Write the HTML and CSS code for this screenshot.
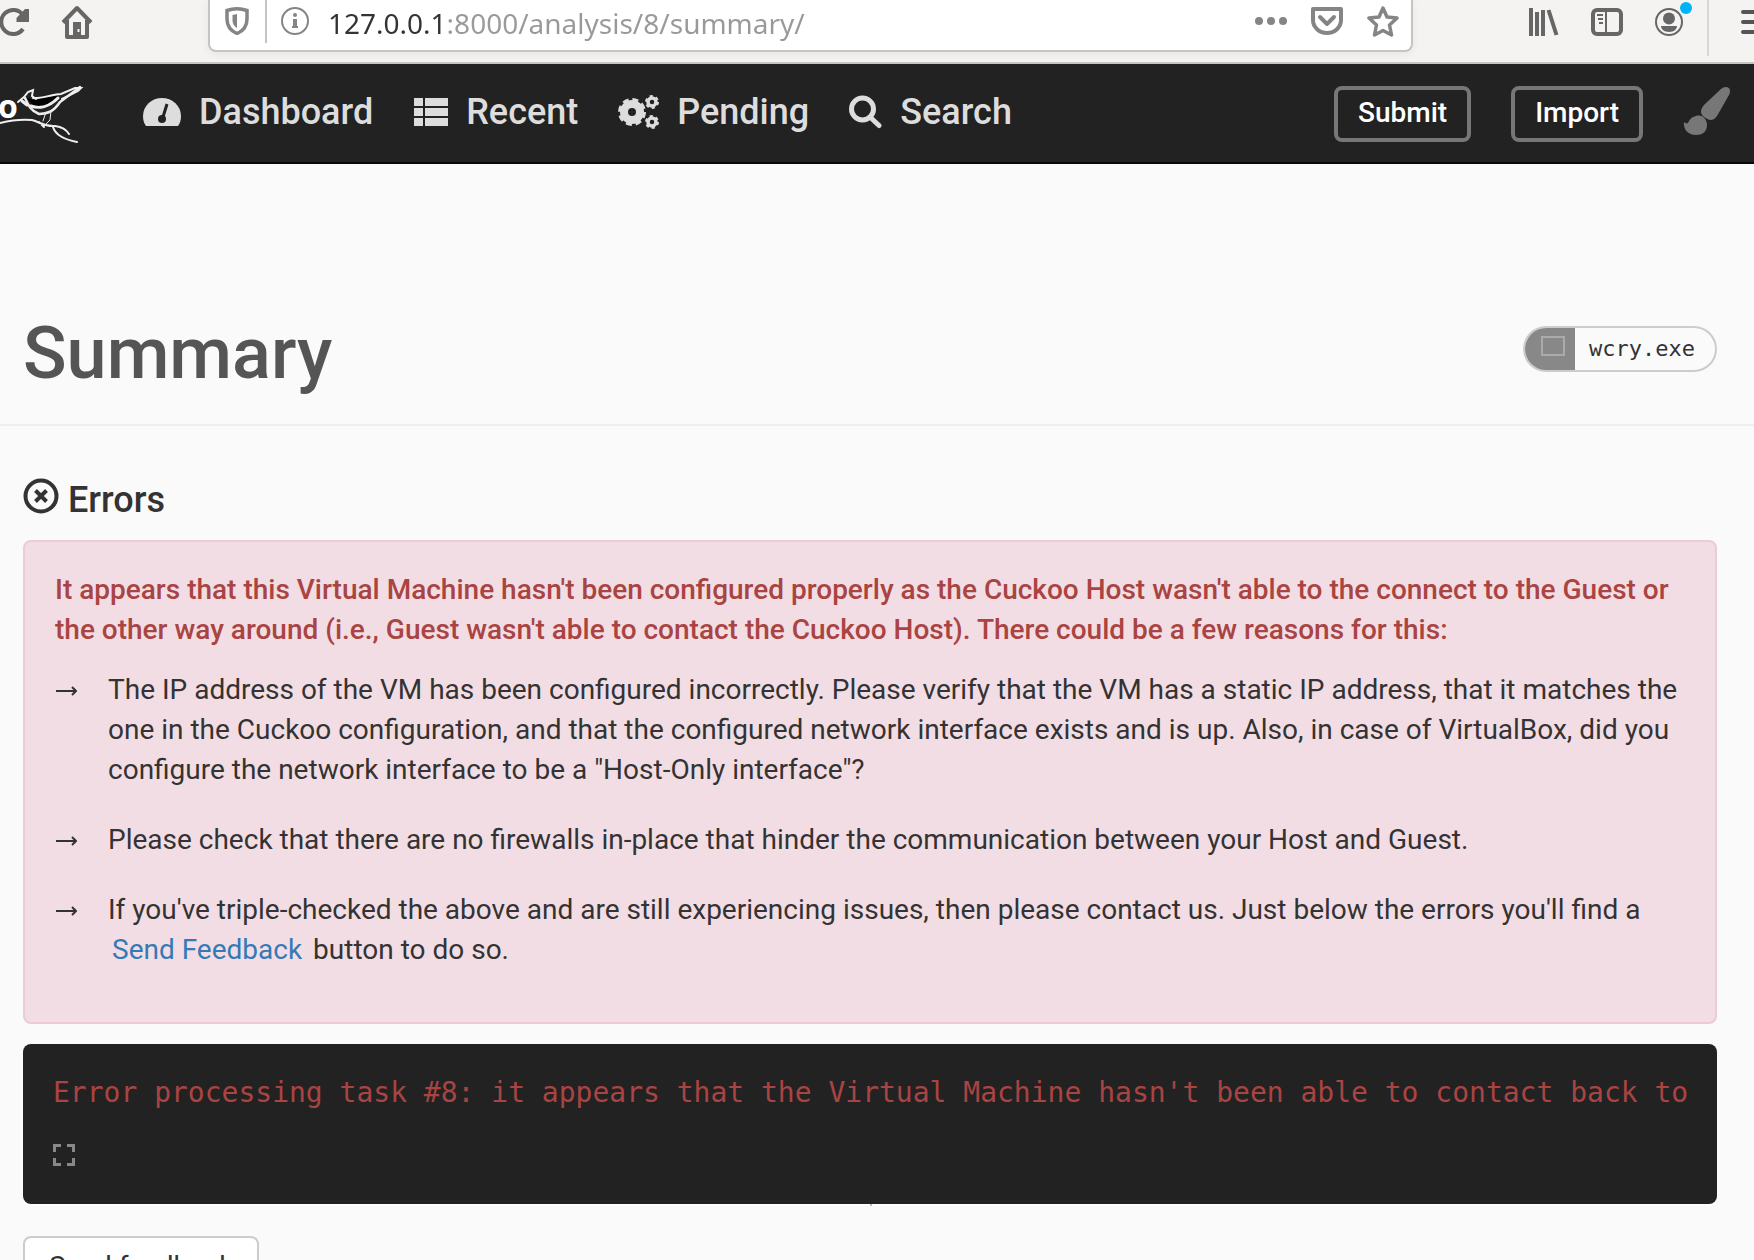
FILE: index.html
```html
<!DOCTYPE html>
<html lang="en">
<head>
<meta charset="utf-8">
<title>Cuckoo Sandbox - Summary</title>
<meta name="viewport" content="width=device-width, initial-scale=1">
<link rel="stylesheet" href="styles.css">
</head>
<body>
<div class="toolbar">
  <div class="toolbar-start">
    <button class="tool" aria-label="Reload"><svg width="30" height="30" viewBox="0 0 30 30"><path d="M23 22A12 12 0 1 1 23 8" fill="none" stroke="#666" stroke-width="4"/><path d="M29 2v13H16.500V11L25 2z" fill="#666"/></svg></button>
    <button class="tool" aria-label="Home"><svg width="32" height="34" viewBox="0 0 32 34"><path d="M2 17.500L16 3l14 14.500M6 15v17h20V15" fill="none" stroke="#666" stroke-width="4" stroke-linejoin="round"/><path d="M12 17h8v14h-8z" fill="#666"/><path d="M16.500 24h2v3h-2z" fill="#f4f3f2"/></svg></button>
  </div>
  <div class="address">
    <button class="tool" aria-label="Tracking protection"><svg width="24" height="28" viewBox="0 0 24 28"><path d="M2 3.500Q12 0 22 3.500V12c0 8-4 12-10 14.500C6 24 2 20 2 12z" fill="none" stroke="#858585" stroke-width="3.500"/><path d="M12 7v14c-3-2-4.500-4-4.500-8V8z" fill="#858585"/></svg></button>
    <span class="address-rule"></span>
    <button class="tool" aria-label="Site information"><svg width="28" height="28" viewBox="0 0 28 28"><circle cx="14" cy="14" r="13" fill="none" stroke="#858585" stroke-width="2"/><circle cx="14" cy="8" r="2" fill="#858585"/><path d="M12 12h4v7h1v2h-6v-2h1z" fill="#858585"/></svg></button>
    <input class="address-input" type="text" aria-label="Address" value="127.0.0.1:8000/analysis/8/summary/">
    <div class="address-actions">
      <button class="tool" aria-label="Page actions"><svg width="32" height="28" viewBox="0 0 32 28"><g fill="#858585"><circle cx="4" cy="14" r="4"/><circle cx="16" cy="14" r="4"/><circle cx="28" cy="14" r="4"/></g></svg></button>
      <button class="tool" aria-label="Save to Pocket"><svg width="32" height="28" viewBox="0 0 32 28"><path d="M2 2h28v11a14 13 0 0 1-28 0z" fill="none" stroke="#858585" stroke-width="4" stroke-linejoin="round"/><path d="M9 10l7 7 7-7" fill="none" stroke="#858585" stroke-width="4" stroke-linecap="round" stroke-linejoin="round"/></svg></button>
      <button class="tool" aria-label="Bookmark"><svg width="32" height="32" viewBox="0 0 32 32"><path d="M16 3l4 9 10 1-7.500 7 2 10L16 25.500 7.500 30l2-10L2 13l10-1z" fill="none" stroke="#858585" stroke-width="3.500" stroke-linejoin="round"/></svg></button>
    </div>
  </div>
  <div class="toolbar-end">
    <button class="tool" aria-label="Library"><svg width="30" height="28" viewBox="0 0 30 28"><path d="M2 0v28M8 4v24M14 2v26M19.500 2l8 25" fill="none" stroke="#666" stroke-width="4"/></svg></button>
    <button class="tool" aria-label="Sidebars"><svg width="32" height="28" viewBox="0 0 32 28"><rect x="2" y="2" width="28" height="24" rx="4" fill="none" stroke="#666" stroke-width="4"/><path d="M15 3v22M6 7h6M7 11h5M8 15h4" stroke="#666" stroke-width="2"/></svg></button>
    <button class="tool account" aria-label="Account"><svg width="28" height="28" viewBox="0 0 28 28"><circle cx="14" cy="14" r="13" fill="none" stroke="#666" stroke-width="2"/><circle cx="14" cy="10.500" r="6" fill="#666"/><path d="M6 18h16c0 3-3 6-8 6s-8-3-8-6z" fill="#666"/></svg><span class="account-dot"></span></button>
    <span class="toolbar-rule"></span>
    <button class="tool" aria-label="Menu"><svg width="30" height="26" viewBox="0 0 30 26"><path d="M2 3h26M2 13h26M2 23h26" stroke="#555" stroke-width="4" stroke-linecap="round"/></svg></button>
  </div>
</div>

<nav class="navbar">
  <a class="brand" href="#" aria-label="Cuckoo">
    <span class="brand-name">o</span>
    <svg class="brand-bird" width="90" height="70" viewBox="0 80 90 70" fill="none" stroke="#eee" stroke-linecap="round">
      <path d="M27 99L35 101 59 96 48 106 33 107z" fill="#000" stroke="none"/>
      <path d="M18 103l6-5 4-5 5-2-1 6 4 3" stroke-width="2"/>
      <path d="M25 99c3 7 6 13 14 16 9 0 15-3 21-12l20-15" stroke-width="2.500"/>
      <path d="M33 99c8 1 16-3 28-4l14-6h6l-3 3-16 8" stroke-width="2"/>
      <path d="M31 107c8 3 18 1 27-8M22 102l5 4" stroke-width="3"/>
      <path d="M46 113l-3 9M51 112l-1 9-5 5" stroke-width="1"/>
      <path d="M0 124c12-3 22-4 32-3 8 2 12 7 23 6 7 1 11 3 14 8M53 128c2 7 9 12 24 15M39 123l5 5" stroke-width="2"/>
    </svg>
  </a>
  <a class="nav-link" href="#"><svg width="40" height="30" viewBox="0 0 40 30"><path d="M1 19a19 18 0 0 1 38 0q0 6-3 10H4q-3-4-3-10z" fill="#ddd"/><path d="M25 7l-4 13" stroke="#222" stroke-width="3"/><circle cx="20" cy="22" r="4" fill="#222"/></svg>Dashboard</a>
  <a class="nav-link" href="#"><svg width="36" height="30" viewBox="0 0 36 30"><path d="M1 1h9v8H1zM12 1h23v8H12zM1 11h9v8H1zM12 11h23v8H12zM1 21h9v8H1zM12 21h23v8H12z" fill="#ddd"/></svg>Recent</a>
  <a class="nav-link" href="#"><svg width="42" height="34" viewBox="0 0 42 34"><g fill="none" stroke="#ddd"><circle cx="14" cy="17" r="8" stroke-width="8"/><circle cx="14" cy="17" r="12.500" stroke-width="3" stroke-dasharray="6 3.820"/><circle cx="34" cy="7" r="4" stroke-width="3.500"/><circle cx="34" cy="7" r="6" stroke-width="2" stroke-dasharray="3.200 3.080"/><circle cx="34" cy="27" r="4" stroke-width="3.500"/><circle cx="34" cy="27" r="6" stroke-width="2" stroke-dasharray="3.200 3.080"/></g></svg>Pending</a>
  <a class="nav-link" href="#"><svg width="34" height="34" viewBox="0 0 34 34"><circle cx="13.500" cy="14" r="11" fill="none" stroke="#ddd" stroke-width="5"/><path d="M21 22l9 8.500" stroke="#ddd" stroke-width="5" stroke-linecap="round"/></svg>Search</a>
  <div class="nav-actions">
    <button class="nav-button">Submit</button>
    <button class="nav-button">Import</button>
    <button class="tool" aria-label="Theme"><svg width="48" height="56" viewBox="0 0 48 56"><path d="M43 1c4 0 5 4 3 8L34 30c-4 6-9 4-13 1-5-4-3-9 1-13L38 3q2-2 5-2z" fill="#777"/><path d="M13 30c6-2 11 3 11 9 0 7-5 10-11 10C5 49 0 43 1 36c2 2 4 2 5-1q2-4 7-5z" fill="#777"/></svg></button>
  </div>
</nav>

<header class="page-header">
  <h1>Summary</h1>
  <div class="crumb"><span class="crumb-icon"><span class="crumb-box"></span></span><span class="crumb-name">wcry.exe</span></div>
</header>

<main class="content">
  <h2><svg width="36" height="36" viewBox="0 0 36 36" fill="none" stroke="#333"><circle cx="18" cy="18" r="15.500" stroke-width="4"/><path d="M12.500 12.500l11 11M23.500 12.500l-11 11" stroke-width="4"/></svg>Errors</h2>
  <section class="alert">
    <p class="alert-lead">It appears that this Virtual Machine hasn't been configured properly as the Cuckoo Host wasn't able to the connect to the Guest or the other way around (i.e., Guest wasn't able to contact the Cuckoo Host). There could be a few reasons for this:</p>
    <ul>
      <li><svg class="arrow" width="22" height="12" viewBox="0 0 22 12"><path d="M1 6h20M17 2l4 4-4 4" fill="none" stroke="#333" stroke-width="2"/></svg><span>The IP address of the VM has been configured incorrectly. Please verify that the VM has a static IP address, that it matches the one in the Cuckoo configuration, and that the configured network interface exists and is up. Also, in case of VirtualBox, did you configure the network interface to be a "Host-Only interface"?</span></li>
      <li><svg class="arrow" width="22" height="12" viewBox="0 0 22 12"><path d="M1 6h20M17 2l4 4-4 4" fill="none" stroke="#333" stroke-width="2"/></svg><span>Please check that there are no firewalls in-place that hinder the communication between your Host and Guest.</span></li>
      <li><svg class="arrow" width="22" height="12" viewBox="0 0 22 12"><path d="M1 6h20M17 2l4 4-4 4" fill="none" stroke="#333" stroke-width="2"/></svg><span>If you've triple-checked the above and are still experiencing issues, then please contact us. Just below the errors you'll find a <a class="feedback-link" href="#feedback">Send Feedback</a> button to do so.</span></li>
    </ul>
  </section>
  <section class="log">
    <pre>Error processing task #8: it appears that the Virtual Machine hasn't been able to contact back to</pre>
    <button class="tool" aria-label="Expand"><svg width="22" height="22" viewBox="0 0 22 22"><path d="M1.500 8V1.500H8M14 1.500h6.500V8M20.500 14v6.500H14M8 20.500H1.500V14" fill="none" stroke="#888" stroke-width="3"/></svg></button>
  </section>
  <button class="feedback-button" id="feedback">Send feedback</button>
</main>
</body>
</html>
```
FILE: styles.css
```css
* {
  box-sizing: border-box;
}

body {
  margin: 0;
  height: 100vh;
  overflow: hidden;
  background: #fafafa;
  color: #333;
  font: 28px/40px Roboto, sans-serif;
}

svg {
  display: block;
  flex: none;
}

.tool {
  display: flex;
  flex: none;
  padding: 0;
  border: 0;
  background: none;
}

/* Browser toolbar */
.toolbar {
  display: flex;
  height: 64px;
  border-bottom: 2px solid #c6c3c0;
  background: #f4f3f2;
}

.toolbar-start,
.toolbar-end {
  display: flex;
  flex: none;
  align-items: center;
  height: 44px;
}

.toolbar-start {
  width: 208px;
  gap: 31px;
}

.toolbar-end {
  width: 341px;
  padding-left: 116px;
  gap: 32px;
}

.address {
  display: flex;
  flex: 1;
  align-items: center;
  height: 52px;
  padding: 0 12px 8px 15px;
  border: 2px solid #c6c3c0;
  border-top: 0;
  border-radius: 0 0 8px 8px;
  background: #fff;
  box-shadow: 0 2px 8px rgba(0, 0, 0, 0.06);
}

.address-rule {
  width: 2px;
  height: 44px;
  margin: 0 14px 0 16px;
  background: #c6c3c0;
}

.address-input {
  flex: 1;
  min-width: 0;
  height: 44px;
  margin-left: 19px;
  padding: 4px 0 0;
  border: 0;
  background: linear-gradient(90deg, #333 119px, #999 119px);
  background-clip: text;
  -webkit-background-clip: text;
  color: transparent;
  font: 28px/40px "Noto Sans", sans-serif;
}

.address-actions {
  display: flex;
  align-items: center;
  gap: 24px;
}

.account {
  position: relative;
}

.account-dot {
  position: absolute;
  top: -6px;
  right: -9px;
  width: 12px;
  height: 12px;
  border-radius: 50%;
  background: #00b3f4;
}

.toolbar-rule {
  align-self: flex-start;
  flex: none;
  width: 2px;
  height: 56px;
  margin-left: -8px;
  background: #d9d7d5;
}

/* Site navigation */
.navbar {
  display: flex;
  align-items: center;
  height: 100px;
  padding: 2px 23px 0 0;
  border-bottom: 2px solid #080808;
  background: #222;
}

.brand {
  position: relative;
  width: 142px;
  height: 70px;
  color: #fff;
  text-decoration: none;
}

.brand-name {
  position: absolute;
  left: -2px;
  top: 5px;
  font: bold 32px/44px "Open Sans", sans-serif;
}

.brand-bird {
  position: absolute;
  left: 0;
  top: 0;
}

.nav-link {
  display: flex;
  align-items: center;
  gap: 17px;
  height: 44px;
  margin: 0 40px 4px 0;
  color: #ddd;
  font-size: 36px;
  font-weight: 500;
  text-decoration: none;
}

.nav-actions {
  display: flex;
  align-items: center;
  gap: 40px;
  margin-left: auto;
}

.nav-button {
  height: 56px;
  padding: 0 20px 2px;
  border: 4px solid #777;
  border-radius: 8px;
  background: none;
  color: #fff;
  font: 500 28px/40px Roboto, sans-serif;
}

/* Page title */
.page-header {
  display: flex;
  align-items: center;
  justify-content: space-between;
  height: 262px;
  padding: 120px 37px 0 23px;
  border-bottom: 2px solid #eee;
}

h1 {
  margin: 0;
  color: #555;
  font-size: 72px;
  font-weight: 500;
  line-height: 80px;
}

.crumb {
  display: flex;
  height: 46px;
  margin-bottom: 10px;
  overflow: hidden;
  border: 2px solid #ccc;
  border-radius: 23px;
}

.crumb-icon {
  width: 50px;
  padding: 8px 16px;
  background: #888;
}

.crumb-box {
  display: block;
  width: 24px;
  height: 20px;
  border: 2px solid #aaa;
}

.crumb-name {
  padding: 0 20px 0 14px;
  font: 22px/42px "DejaVu Sans Mono", monospace;
}

/* Errors */
.content {
  padding: 52px 37px 0 23px;
}

h2 {
  display: flex;
  gap: 9px;
  margin: 0 0 18px;
  font-size: 36px;
  font-weight: 500;
  line-height: 44px;
}

.alert {
  padding: 28px 30px 52px;
  border: 2px solid #ebccd1;
  border-radius: 8px;
  background: #f3dde4;
}

.alert-lead {
  margin: 0 0 20px;
  color: #a94442;
  font-weight: 500;
}

.alert ul {
  display: grid;
  gap: 30px;
  margin: 0;
  padding: 0;
  list-style: none;
}

.alert li {
  display: flex;
  gap: 31px;
}

.arrow {
  margin-top: 15px;
}

.feedback-link {
  margin: 0 4px;
  color: #337ab7;
  text-decoration: none;
}

.log {
  position: relative;
  height: 160px;
  margin-top: 20px;
  padding: 29px 30px;
  border-radius: 8px;
  background: #222;
  box-shadow: 0 2px 0 #fff;
}

.log::after {
  content: "";
  position: absolute;
  top: 100%;
  left: 50%;
  width: 2px;
  height: 2px;
  background: #bbb;
}

.log pre {
  margin: 0 0 31px;
  overflow: hidden;
  color: #a94442;
  font: 28px/40px "DejaVu Sans Mono", monospace;
}

.feedback-button {
  height: 62px;
  margin-top: 32px;
  padding: 0 24px;
  border: 2px solid #ccc;
  border-radius: 8px;
  background: #fff;
  color: #333;
  font: 28px/40px Roboto, sans-serif;
}
```
